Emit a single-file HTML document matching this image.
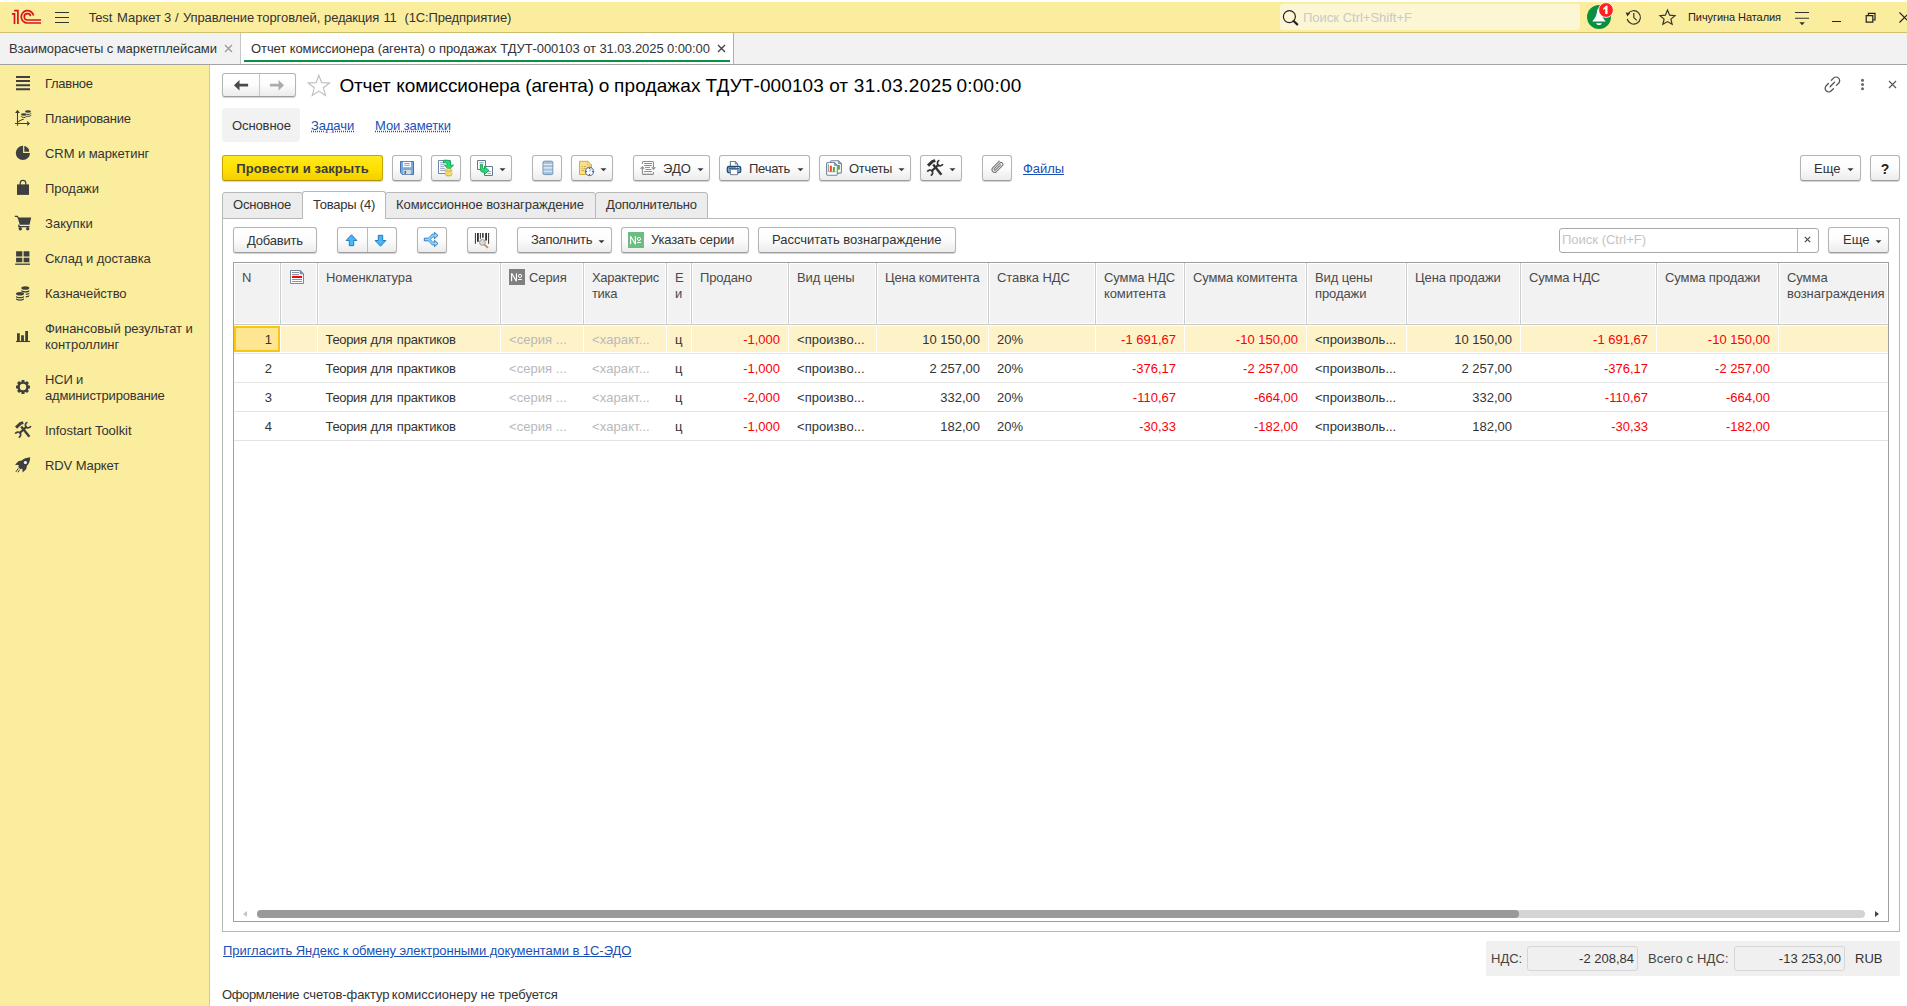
<!DOCTYPE html>
<html lang="ru">
<head>
<meta charset="utf-8">
<title>1C</title>
<style>
*{box-sizing:border-box;margin:0;padding:0}
html,body{width:1907px;height:1006px;overflow:hidden;background:#fff}
body{font-family:"Liberation Sans",sans-serif;font-size:13px;color:#333;position:relative;line-height:16px}
.abs{position:absolute}
.t{position:absolute;white-space:pre;line-height:16px}
/* top bar */
#topstrip{left:0;top:0;width:1907px;height:2px;background:#fff}
#topbar{left:0;top:2px;width:1907px;height:31px;background:#fbed9e;border-bottom:1px solid #cdbf6e}
#tabbar{left:0;top:33px;width:1907px;height:32px;background:#f2f2f2;border-bottom:1px solid #a3a3a3}
#side{left:0;top:65px;width:210px;height:941px;background:#fbed9e;border-right:1px solid #d6ca85}
.sb{position:absolute;left:45px;font-size:13px;line-height:16px;color:#333;white-space:pre}
.si{position:absolute;left:14px;width:18px;height:18px}
/* buttons */
.btn{position:absolute;height:26px;border:1px solid #b4b4b4;border-bottom-color:#9c9c9c;border-radius:3px;background:linear-gradient(#ffffff 0%,#fdfdfd 45%,#ececec 100%);box-shadow:0 1px 1px rgba(0,0,0,.18);font-size:13px;line-height:24px;padding-top:1px;color:#333;white-space:pre;text-align:center}
.btn.y{background:linear-gradient(#ffe920 0%,#ffe100 50%,#f2cf00 100%);border-color:#c8a600;border-bottom-color:#b39400;font-weight:bold;color:#3b3b3b}
.dd{display:inline-block;width:0;height:0;border-left:3.5px solid transparent;border-right:3.5px solid transparent;border-top:4px solid #333;vertical-align:middle;margin-left:6px;position:relative;top:0px}
a.lk{position:absolute;color:#1a50b5;text-decoration:underline;white-space:pre;line-height:16px}
a.dl{position:absolute;color:#1a50b5;text-decoration:underline dotted;white-space:pre;line-height:16px}
/* table */
.th{position:absolute;top:263px;height:60px;background:#f2f2f2;border-left:1px solid #fff;box-shadow:inset -1px 0 0 #d0d0d0;padding:7px 0 0 8px;color:#444;line-height:16px;white-space:pre}
.row{position:absolute;left:235px;width:1653px;height:29px;border-bottom:1px solid #e6e6e6}
.c{position:absolute;top:6px;line-height:16px;white-space:pre}
.r{text-align:right}
.neg{color:#fb0007}
.ph{color:#b9b9b9}
.tab{position:absolute;top:192px;height:27px;background:#ececec;border:1px solid #b8b8b8;border-radius:3px 3px 0 0;line-height:16px;padding:4px 0 0 10px;white-space:pre;color:#333}
.tab.on{top:191px;height:28px;background:#fff;border-bottom:none;padding-top:5px;z-index:2}
</style>
</head>
<body>
<div class="abs" id="topstrip"></div>
<div class="abs" id="topbar"></div>
<div class="abs" id="tabbar"></div>
<div class="abs" id="side"></div>
<!--TOPBAR-->
<svg class="abs" style="left:11px;top:9px" width="32" height="16" viewBox="0 0 32 16">
 <g fill="none" stroke="#d8141c" stroke-width="1.650">
  <path d="M.900 4.900H3.500V15" stroke-width="1.700"/>
  <path d="M3.100 1.700H6.900V15" stroke-width="1.700"/>
  <path d="M30 14H16.5A6.2 6.2 0 1 1 22.5 6.5"/>
  <path d="M30 11H16.5A3.2 3.2 0 1 1 19.6 7.2"/>
 </g>
</svg>
<svg class="abs" style="left:54px;top:11px" width="16" height="13" viewBox="0 0 16 13"><path d="M1 1.5h14M1 6.5h14M1 11.5h14" stroke="#333" stroke-width="1.1" fill="none"/></svg>
<div class="t" style="left:88.7px;top:10px;letter-spacing:-0.05px">Test</div>
<div class="t" style="left:117.1px;top:10px;letter-spacing:-0.05px">Маркет</div>
<div class="t" style="left:164px;top:10px;letter-spacing:0px">3</div>
<div class="t" style="left:175.1px;top:10px;letter-spacing:0px">/</div>
<div class="t" style="left:183px;top:10px;letter-spacing:-0.12px">Управление</div>
<div class="t" style="left:256.5px;top:10px;letter-spacing:-0.05px">торговлей,</div>
<div class="t" style="left:324.1px;top:10px;letter-spacing:-0.19px">редакция</div>
<div class="t" style="left:383.4px;top:10px;letter-spacing:-0.05px">11</div>
<div class="t" style="left:404.6px;top:10px;letter-spacing:-0.15px">(1С:Предприятие)</div>
<div class="abs" style="left:1280px;top:4px;width:300px;height:26px;background:#fdf6d4;border-radius:3px"></div>
<svg class="abs" style="left:1281px;top:8px" width="20" height="20" viewBox="0 0 20 20"><circle cx="8.4" cy="8.6" r="6" fill="none" stroke="#222" stroke-width="1.2"/><path d="M12.6 13l3.6 3.4" stroke="#222" stroke-width="2.2" stroke-linecap="round"/></svg>
<div class="t" style="left:1303px;top:10px;color:#c9c9c9">Поиск Ctrl+Shift+F</div>
<svg class="abs" style="left:1585px;top:2px" width="32" height="30" viewBox="0 0 32 30">
 <circle cx="14" cy="15" r="12" fill="#0a9040"/>
 <path d="M14 6.5c-1 0-1.6.7-1.7 1.6-.8 6-2.4 8.600-5 11.3h13.400c-2.600-2.700-4.200-5.300-5-11.300-.1-.9-.700-1.600-1.700-1.600z" fill="#fff"/>
 <path d="M11 21.200h6l-1.600 1.700h-2.800z" fill="#fff"/>
 <circle cx="21" cy="8" r="7.400" fill="#ff2020" stroke="#fff" stroke-width=".9"/>
 <path d="M18.300 6.200l2.700-2.400h1.500v8.300h-2.300v-5.300l-1.900 1.300z" fill="#fff"/>
</svg>
<svg class="abs" style="left:1623px;top:7px" width="22" height="22" viewBox="0 0 22 22">
 <path d="M5 6.900A6.700 6.700 0 1 1 4.200 12" fill="none" stroke="#333" stroke-width="1.200"/>
 <path d="M2.600 5.400l4.600.600-2.800 3.400z" fill="#333"/>
 <path d="M10.800 6v4.600l3 2.800" fill="none" stroke="#333" stroke-width="1.200"/>
</svg>
<svg class="abs" style="left:1658px;top:8px" width="19" height="19" viewBox="0 0 20 20"><path d="M10 2.200l2.250 5.300 5.650.5-4.300 3.700 1.300 5.500L10 14.300 5.100 17.200l1.300-5.500L2.100 8l5.650-.5z" fill="none" stroke="#333" stroke-width="1.250" stroke-linejoin="miter"/></svg>
<div class="t" style="left:1688px;top:9px;font-size:11px;color:#222;letter-spacing:-0.07px">Пичугина Наталия</div>
<svg class="abs" style="left:1794px;top:9px" width="18" height="18" viewBox="0 0 18 18"><path d="M1 3.500h14M1 9.200h14" stroke="#333" stroke-width="1.100" fill="none"/><path d="M5.400 13.200h5.400l-2.700 3z" fill="#333"/></svg>
<div class="abs" style="left:1832px;top:21px;width:9px;height:1.300px;background:#222"></div>
<svg class="abs" style="left:1864px;top:11px" width="14" height="14" viewBox="0 0 14 14"><path d="M2.200 4.600h6.600v6.600H2.200zM4.400 4.600V2.400h6.600v6.600H8.800" fill="none" stroke="#222" stroke-width="1.200"/></svg>
<svg class="abs" style="left:1897px;top:10px" width="14" height="14" viewBox="0 0 14 14"><path d="M2.500 2.500l10 10M12.500 2.500l-10 10" stroke="#222" stroke-width="1.200" fill="none"/></svg>
<!--TABS-->
<div class="t" style="left:9px;top:41px;color:#333;letter-spacing:-0.06px">Взаиморасчеты с маркетплейсами</div>
<svg class="abs" style="left:224px;top:44px" width="9" height="9" viewBox="0 0 9 9"><path d="M1 1l7 7M8 1l-7 7" stroke="#999" stroke-width="1.300" fill="none"/></svg>
<div class="abs" style="left:240px;top:33px;width:1px;height:31px;background:#c6c6c6"></div>
<div class="abs" style="left:241px;top:33px;width:492px;height:31px;background:#fff"></div>
<div class="abs" style="left:733px;top:33px;width:1px;height:31px;background:#b0b0b0"></div>
<div class="abs" style="left:244px;top:60px;width:486px;height:2px;background:#0a9040"></div>
<div class="t" style="left:251px;top:41px;color:#333;letter-spacing:-0.09px">Отчет комиссионера (агента) о продажах ТДУТ-000103 от 31.03.2025 0:00:00</div>
<svg class="abs" style="left:717px;top:44px" width="9" height="9" viewBox="0 0 9 9"><path d="M1 1l7 7M8 1l-7 7" stroke="#444" stroke-width="1.400" fill="none"/></svg>
<!--SIDEBAR-->
<svg class="abs" style="left:15px;top:75px" width="17" height="16" viewBox="0 0 17 16"><path d="M1 2h14M1 6.100h14M1 10.200h14M1 14.300h14" stroke="#3f3f3f" stroke-width="2" fill="none"/></svg>
<div class="sb" style="top:76px;letter-spacing:-0.28px">Главное</div>
<svg class="abs" style="left:14px;top:109px" width="18" height="18" viewBox="0 0 18 18">
 <path d="M3.500 2.500V16.700M1 14.500H14" stroke="#3f3f3f" stroke-width="1.100" fill="none"/>
 <path d="M3.500 .800l2.500 3.100H1zM16 14.500l-2.800 2.500v-5z" fill="#3f3f3f"/>
 <path d="M3.800 12.600H5.300L5.700 11.400H7.400L7.700 10.500H9.700" stroke="#3f3f3f" stroke-width="1" fill="none"/>
 <ellipse cx="14" cy="2.500" rx="3" ry="1.300" fill="#3f3f3f"/>
 <path d="M12.600 5.300c1.600.400 4.400.100 4.400-1M12.600 7.200c1.600.400 4.400.100 4.400-1" stroke="#3f3f3f" stroke-width="1" fill="none"/>
 <ellipse cx="9.800" cy="5.500" rx="2.900" ry="1.300" fill="#3f3f3f"/>
 <path d="M7 7.300c0 1.600 5.600 1.600 5.600 0" stroke="#3f3f3f" stroke-width="1" fill="none"/>
</svg>
<div class="sb" style="top:111px;letter-spacing:-0.25px">Планирование</div>
<svg class="abs" style="left:14px;top:144px" width="18" height="18" viewBox="0 0 18 18">
 <circle cx="8.900" cy="8.900" r="7.100" fill="#3f3f3f"/>
 <path d="M9.700 1v7.300h7.500" stroke="#fbed9e" stroke-width="1.200" fill="none"/>
 <path d="M14.300 2.600A7.100 7.100 0 0 1 16 8" stroke="#fbed9e" stroke-width="1.300" fill="none"/>
</svg>
<div class="sb" style="top:146px;letter-spacing:-0.07px">CRM и маркетинг</div>
<svg class="abs" style="left:14px;top:179px" width="18" height="18" viewBox="0 0 18 18">
 <path d="M3 5.400h12v10.500H3z" fill="#3f3f3f"/>
 <path d="M6.200 7.400V4.200a2.800 2.800 0 0 1 5.600 0v3.200" stroke="#3f3f3f" stroke-width="1.200" fill="none"/>
</svg>
<div class="sb" style="top:181px;letter-spacing:-0.05px">Продажи</div>
<svg class="abs" style="left:14px;top:215px" width="19" height="17" viewBox="0 0 19 17">
 <path d="M.800 1.300h2.600l1 2" stroke="#3f3f3f" stroke-width="1.200" fill="none"/>
 <path d="M3.600 2.600h13.600l-1.700 7.200H5.800z" fill="#3f3f3f"/>
 <path d="M5.200 9.500l-.500 2.200h10.800" stroke="#3f3f3f" stroke-width="1.200" fill="none"/>
 <circle cx="6.300" cy="13.800" r="1.700" fill="#3f3f3f"/><circle cx="13.700" cy="13.800" r="1.700" fill="#3f3f3f"/>
</svg>
<div class="sb" style="top:216px;letter-spacing:0.05px">Закупки</div>
<svg class="abs" style="left:14px;top:250px" width="18" height="16" viewBox="0 0 18 16">
 <path d="M2.100 1.300h6.200v5.100H2.100zM9.600 1.300h5.800v5.100H9.600zM2.100 7.700h6.200v4.600H2.100zM9.600 7.700h5.800v4.600H9.600z" fill="#3f3f3f"/>
 <path d="M1.200 14.200H16" stroke="#3f3f3f" stroke-width="1.300"/>
</svg>
<div class="sb" style="top:251px;letter-spacing:-0.05px">Склад и доставка</div>
<svg class="abs" style="left:14px;top:285px" width="18" height="17" viewBox="0 0 18 17">
 <g fill="#3f3f3f">
 <ellipse cx="11.300" cy="3" rx="4" ry="1.800"/>
 <path d="M7.300 4.600c0 2.200 8 2.200 8 0v1.300c0 2.200-8 2.200-8 0z"/>
 <path d="M11.800 8.700c1.900-.100 3.500-.700 3.500-1.700v1.300c0 1-1.600 1.600-3.500 1.700z"/>
 <path d="M11.800 11.100c1.900-.100 3.500-.700 3.500-1.700v1.300c0 1-1.600 1.600-3.500 1.700z"/>
 <ellipse cx="6" cy="8.800" rx="4" ry="1.800"/>
 <path d="M2 10.400c0 2.200 8 2.200 8 0v1.300c0 2.200-8 2.200-8 0z"/>
 <path d="M2 12.800c0 2.200 8 2.200 8 0v1.300c0 2.200-8 2.200-8 0z"/>
 </g>
</svg>
<div class="sb" style="top:286px;letter-spacing:-0.08px">Казначейство</div>
<svg class="abs" style="left:14px;top:328px" width="18" height="16" viewBox="0 0 18 16">
 <path d="M3 5.200h2.800v8H3zM7.100 7.300h2.800v5.900H7.100zM11.200 3.100H14v10.100h-2.800z" fill="#3f3f3f"/>
 <path d="M2 13.500h14" stroke="#3f3f3f" stroke-width="1.100"/>
</svg>
<div class="sb" style="top:321px;letter-spacing:-0.05px">Финансовый результат и
контроллинг</div>
<svg class="abs" style="left:14px;top:378px" width="18" height="18" viewBox="0 0 18 18">
 <g transform="translate(9 9)">
  <g fill="#3f3f3f">
   <rect x="-1.500" y="-7" width="3" height="14" rx=".5"/>
   <rect x="-1.500" y="-7" width="3" height="14" rx=".5" transform="rotate(45)"/>
   <rect x="-1.500" y="-7" width="3" height="14" rx=".5" transform="rotate(90)"/>
   <rect x="-1.500" y="-7" width="3" height="14" rx=".5" transform="rotate(135)"/>
   <circle r="5.600"/>
  </g>
  <circle r="3.200" fill="#fbed9e"/>
 </g>
</svg>
<div class="sb" style="top:372px;letter-spacing:-0.17px">НСИ и
администрирование</div>
<svg class="abs" style="left:14px;top:421px" width="18" height="18" viewBox="0 0 18 18">
 <g stroke="#3f3f3f" fill="none">
  <path d="M7.200 5.600L15.400 15.800" stroke-width="2.400"/>
  <path d="M2 6.700L6.600 2.400L9.300 1.600" stroke-width="3" stroke-linejoin="round"/>
  <path d="M5.400 12.300L12.600 5.600" stroke-width="2.200"/>
  <path d="M13.400 1.300A2.800 2.800 0 1 0 16.800 5" stroke-width="1.700"/>
  <path d="M4.700 16.500A2.800 2.800 0 1 0 1.300 12.800" stroke-width="1.700"/>
 </g>
</svg>
<div class="sb" style="top:423px;letter-spacing:-0.04px">Infostart Toolkit</div>
<svg class="abs" style="left:14px;top:456px" width="18" height="18" viewBox="0 0 18 18">
 <path d="M16.200 1.200C12.400 1.500 9.700 2.600 7.700 4.600L4.400 5.200L1 8.800L5 9.300L4.200 11.100L6.400 13.300L8.200 12.500L8.700 16.500L12.300 13.100L12.900 9.800C15 7.700 16.100 5 16.200 1.200Z" fill="#3f3f3f"/>
 <circle cx="11.400" cy="6.500" r="1.600" fill="#fff"/>
 <path d="M4.300 12.400L1.800 16M5.600 13.600L4 16.300" stroke="#3f3f3f" stroke-width="1"/>
</svg>
<div class="sb" style="top:458px;letter-spacing:-0.1px">RDV Маркет</div>
<!--HEADER-->
<div class="btn" style="left:222px;top:73px;width:74px;height:24px;border-radius:3px"></div>
<div class="abs" style="left:259px;top:74px;width:1px;height:22px;background:#c8c8c8"></div>
<svg class="abs" style="left:233px;top:78px" width="16" height="14" viewBox="0 0 16 14"><path d="M.900 7.200L6.500 1.900V5.800H15.100V8.600H6.500V12.500Z" fill="#4a4a4a"/></svg>
<svg class="abs" style="left:269px;top:78px" width="16" height="14" viewBox="0 0 16 14"><path d="M15.100 7.200L9.500 1.900V5.800H.900V8.600H9.500V12.500Z" fill="#ababab"/></svg>
<svg class="abs" style="left:306px;top:73px" width="26" height="25" viewBox="0 0 26 25"><path d="M12.800 2.200l2.900 7.400 7.800.3-6.100 4.900 2.100 7.600-6.700-4.300-6.600 4.300 2.100-7.600-6.100-4.900 7.800-.3z" fill="#fff" stroke="#b9bcc0" stroke-width="1.100" stroke-linejoin="miter"/></svg>
<div class="t" style="left:339.5px;top:74px;font-size:19px;line-height:24px;color:#000;letter-spacing:-0.2px">Отчет</div>
<div class="t" style="left:396.3px;top:74px;font-size:19px;line-height:24px;color:#000;letter-spacing:-0.12px">комиссионера</div>
<div class="t" style="left:525.3px;top:74px;font-size:19px;line-height:24px;color:#000;letter-spacing:-0.16px">(агента)</div>
<div class="t" style="left:598.8px;top:74px;font-size:19px;line-height:24px;color:#000;letter-spacing:0px">о</div>
<div class="t" style="left:614px;top:74px;font-size:19px;line-height:24px;color:#000;letter-spacing:0.14px">продажах</div>
<div class="t" style="left:705.5px;top:74px;font-size:19px;line-height:24px;color:#000;letter-spacing:0.08px">ТДУТ-000103</div>
<div class="t" style="left:829.3px;top:74px;font-size:19px;line-height:24px;color:#000;letter-spacing:-0.2px">от</div>
<div class="t" style="left:853.8px;top:74px;font-size:19px;line-height:24px;color:#000;letter-spacing:0.36px">31.03.2025</div>
<div class="t" style="left:956.5px;top:74px;font-size:19px;line-height:24px;color:#000;letter-spacing:0.23px">0:00:00</div>
<svg class="abs" style="left:1823px;top:75px" width="19" height="19" viewBox="0 0 19 19"><g fill="none" stroke="#555" stroke-width="1.300" stroke-linecap="round"><path d="M8.400 5.200l2.100-2.100a3.600 3.600 0 0 1 5.100 5.100l-2.200 2.200"/><path d="M10.400 13.700l-2.100 2.100a3.600 3.600 0 0 1-5.100-5.100l2.200-2.200"/><path d="M7.100 11.700l4.400-4.400"/></g></svg>
<svg class="abs" style="left:1860px;top:78px" width="5" height="13" viewBox="0 0 5 13"><circle cx="2.500" cy="2.300" r="1.500" fill="#666"/><circle cx="2.500" cy="6.500" r="1.500" fill="#666"/><circle cx="2.500" cy="10.700" r="1.500" fill="#666"/></svg>
<svg class="abs" style="left:1888px;top:80px" width="9" height="9" viewBox="0 0 9 9"><path d="M1 1l7 7M8 1l-7 7" stroke="#555" stroke-width="1.100" fill="none"/></svg>
<div class="abs" style="left:222px;top:108px;width:78px;height:34px;background:#f2f2f2;border-radius:4px"></div>
<div class="t" style="left:232px;top:118px;color:#333;letter-spacing:-0.1px">Основное</div>
<a class="dl" style="left:311px;top:118px;letter-spacing:-0.1px">Задачи</a>
<a class="dl" style="left:375px;top:118px;letter-spacing:-0.1px">Мои заметки</a>
<!--CMDBAR-->
<div class="btn y" style="left:222px;top:155px;width:161px;letter-spacing:0.12px">Провести и закрыть</div>
<div class="btn" style="left:392px;top:155px;width:30px"></div>
<svg class="abs" style="left:399px;top:160px" width="16" height="16" viewBox="0 0 16 16">
 <path d="M1.500 1.500h13v13H3.300L1.500 12.700z" fill="#7ba7dc" stroke="#4572ad" stroke-width="1"/>
 <path d="M4 1.800h8v5.400H4z" fill="#fff"/><path d="M5.200 3.500h5.600M5.200 5.300h5.600" stroke="#7ba7dc" stroke-width="1"/>
 <path d="M4.300 10h7.600v4.300H4.300z" fill="#d8dcdf"/><path d="M5.500 10.800h1.600v3.200H5.500z" fill="#3f6fae"/>
</svg>
<div class="btn" style="left:431px;top:155px;width:30px"></div>
<svg class="abs" style="left:437px;top:159px" width="18" height="18" viewBox="0 0 18 18">
 <path d="M1.500 1.500h12v13h-12z" fill="#fff" stroke="#6d87a8" stroke-width="1"/>
 <path d="M3.200 3.700h4M3.200 5.700h4M3.200 7.700h4M3.200 9.700h5M3.200 11.700h5" stroke="#8ea3c0" stroke-width="1"/>
 <path d="M6.400 1.200H10.500C12.600 1.200 13.700 2.400 13.700 4.400V6.200H16.600L11.900 10.600L7.300 6.200H10.100V4.900C10.100 4.200 9.800 3.900 9.100 3.900H6.400Z" fill="#1fdc78" stroke="#0c9a48" stroke-width=".8" stroke-linejoin="round"/>
 <path d="M8.400 10.900v4.900c0 1.700 6.400 1.700 6.400 0v-4.900z" fill="#f0c832" stroke="#cda21a" stroke-width=".6"/>
 <ellipse cx="11.600" cy="10.900" rx="3.200" ry="1.200" fill="#f9e88a" stroke="#cda21a" stroke-width=".6"/>
 <path d="M8.400 12.500c0 1.700 6.400 1.700 6.400 0M8.400 14.100c0 1.700 6.400 1.700 6.400 0" fill="none" stroke="#fdf2b4" stroke-width=".8"/>
</svg>
<div class="btn" style="left:470px;top:155px;width:42px"></div>
<svg class="abs" style="left:476px;top:159px" width="18" height="18" viewBox="0 0 18 18">
 <path d="M1.500 1.500h8v9h-8z" fill="#fff" stroke="#5e7896" stroke-width="1"/>
 <path d="M3.200 3.700h4.600" stroke="#8ea3c0" stroke-width="1"/>
 <path d="M8.500 7.500h8v9h-8z" fill="#fff" stroke="#5e7896" stroke-width="1"/>
 <path d="M11.500 12.600h3.600M11.500 14.600h3.600" stroke="#8ea3c0" stroke-width="1"/>
 <path d="M4.300 5.400h2.200v3c0 .9.400 1.300 1.300 1.300h.6V7.400l4.600 4-4.600 4v-2.200H7.200c-2 0-2.900-1-2.900-2.900z" fill="#1fdc78" stroke="#0c9a48" stroke-width=".8"/>
</svg>
<svg class="abs" style="left:499px;top:168px" width="7" height="4" viewBox="0 0 7 4"><path d="M.500 .200h6L3.500 3.300z" fill="#3a3a3a"/></svg>
<div class="btn" style="left:532px;top:155px;width:30px"></div>
<svg class="abs" style="left:541.500px;top:160px" width="12" height="16" viewBox="0 0 12 16">
 <rect x="1" y="1.200" width="9.800" height="13.400" rx="1.300" fill="#a5c2dc" stroke="#6f93b6" stroke-width="1"/>
 <path d="M1.500 4.500h8.800M1.500 7.900h8.800M1.500 11.300h8.800" stroke="#e6eff7" stroke-width="1.100"/>
</svg>
<div class="btn" style="left:571px;top:155px;width:42px"></div>
<svg class="abs" style="left:578px;top:160px" width="18" height="18" viewBox="0 0 18 18">
 <path d="M1.500 1.300H9.800L13.500 5V14.500H1.500Z" fill="#f6df8e" stroke="#d6ad3c" stroke-width="1"/>
 <path d="M9.800 1.300V5H13.500Z" fill="#fcf1c4" stroke="#d6ad3c" stroke-width=".8"/>
 <path d="M3.500 6.500h1.500M6 6.500h2M3.500 8.600h1M5.500 8.600h2M3.500 10.500h2.500" stroke="#d6ad3c" stroke-width="1"/>
 <circle cx="11.500" cy="11.500" r="4.100" fill="#fff" stroke="#4a86c2" stroke-width="1.200"/>
 <path d="M11.500 11.500L13 9.300" stroke="#8fb4e0" stroke-width="1.100"/>
 <g fill="#f01818"><circle cx="11.500" cy="8.500" r=".650"/><circle cx="11.500" cy="14.500" r=".650"/><circle cx="8.500" cy="11.500" r=".650"/><circle cx="14.500" cy="11.500" r=".650"/></g>
</svg>
<svg class="abs" style="left:600px;top:168px" width="7" height="4" viewBox="0 0 7 4"><path d="M.500 .200h6L3.500 3.300z" fill="#3a3a3a"/></svg>
<div class="btn" style="left:633px;top:155px;width:77px"></div>
<svg class="abs" style="left:639px;top:160px" width="18" height="16" viewBox="0 0 18 16">
 <path d="M3.400 8.600V13.200a1.200 1.200 0 0 0 1.200 1.200H13.300a1.200 1.200 0 0 0 1.200-1.200V12.200M3.400 3.900V2.700a1.200 1.200 0 0 1 1.200-1.200H13.300a1.200 1.200 0 0 1 1.200 1.200V7.200" fill="none" stroke="#8c8c8c" stroke-width="1.100"/>
 <path d="M5.100 3.500h7.900M5.100 5.500h7.900M6 7.400h5M6.500 9.500h5.800M5.100 11.500h7.900" stroke="#8f8f8f" stroke-width="1"/>
 <path d="M.900 8.800L3.400 6L5.900 8.800Z" fill="#8c8c8c"/>
 <path d="M12 7.200H17L14.500 10Z" fill="#8c8c8c"/>
</svg>
<div class="t" style="left:663px;top:161px">ЭДО</div>
<svg class="abs" style="left:697px;top:168px" width="7" height="4" viewBox="0 0 7 4"><path d="M.500 .200h6L3.500 3.300z" fill="#3a3a3a"/></svg>
<div class="btn" style="left:719px;top:155px;width:91px"></div>
<svg class="abs" style="left:726px;top:160px" width="16" height="16" viewBox="0 0 16 16">
 <path d="M4.400 6.600V1.500H9.300L11.600 4.100V6.600" fill="#fff" stroke="#6e8098" stroke-width="1.100"/>
 <path d="M9.200 1.500V4.100H11.600Z" fill="#7e90a6" stroke="#6e8098" stroke-width=".6"/>
 <rect x="1.300" y="6.500" width="13.400" height="6.200" rx="1.600" fill="#7fa6cf" stroke="#1f4e7c" stroke-width="1.300"/>
 <path d="M3 8.500h10" stroke="#3c5d80" stroke-width="1"/>
 <circle cx="10.300" cy="7.500" r=".550" fill="#fff"/><circle cx="12.400" cy="7.500" r=".550" fill="#fff"/>
 <path d="M4.400 9.300h7.200v5.400H4.400z" fill="#fff" stroke="#6e8098" stroke-width="1"/>
</svg>
<div class="t" style="left:749px;top:161px;letter-spacing:-0.25px">Печать</div>
<svg class="abs" style="left:797px;top:168px" width="7" height="4" viewBox="0 0 7 4"><path d="M.500 .200h6L3.500 3.300z" fill="#3a3a3a"/></svg>
<div class="btn" style="left:819px;top:155px;width:92px"></div>
<svg class="abs" style="left:825px;top:159px" width="18" height="18" viewBox="0 0 18 18">
 <path d="M5.500 12.900V2.900a1.200 1.200 0 0 1 1.200-1.200H13.300L16.400 4.800V12.900a1.200 1.200 0 0 1-1.200 1.200H6.700a1.200 1.200 0 0 1-1.200-1.200Z" fill="#fff" stroke="#70859a" stroke-width="1.100"/>
 <path d="M13.300 1.700V4.800H16.400Z" fill="#8a9cae" stroke="#70859a" stroke-width=".6"/>
 <path d="M13 5.900h1.900v4.100H13z" fill="#4fae3c"/><path d="M12.800 10.500h2" stroke="#999" stroke-width=".8"/>
 <path d="M1.600 15.100V4.700a1.200 1.200 0 0 1 1.200-1.200H9.300L12.300 6.500V15.100a1.200 1.200 0 0 1-1.200 1.200H2.800a1.200 1.200 0 0 1-1.200-1.200Z" fill="#fff" stroke="#70859a" stroke-width="1.100"/>
 <path d="M9.300 3.500V6.500H12.300Z" fill="#8a9cae" stroke="#70859a" stroke-width=".6"/>
 <path d="M3.400 5.200V12.700H10.700" fill="none" stroke="#8a8a8a" stroke-width=".9"/>
 <path d="M4.900 6.800h1.900v5.500H4.900z" fill="#f03c1c"/><path d="M7.900 8h2v4.300h-2z" fill="#3fb02a"/>
</svg>
<div class="t" style="left:849px;top:161px;letter-spacing:-0.3px">Отчеты</div>
<svg class="abs" style="left:898px;top:168px" width="7" height="4" viewBox="0 0 7 4"><path d="M.500 .200h6L3.500 3.300z" fill="#3a3a3a"/></svg>
<div class="btn" style="left:920px;top:155px;width:42px"></div>
<svg class="abs" style="left:926px;top:159px" width="18" height="18" viewBox="0 0 18 18">
 <g stroke="#333" fill="none">
  <path d="M7.200 5.600L15.400 15.800" stroke-width="2.400"/>
  <path d="M2 6.700L6.600 2.400L9.300 1.600" stroke-width="3" stroke-linejoin="round"/>
  <path d="M5.400 12.300L12.600 5.600" stroke-width="2.200"/>
  <path d="M13.400 1.300A2.800 2.800 0 1 0 16.800 5" stroke-width="1.700"/>
  <path d="M4.700 16.500A2.800 2.800 0 1 0 1.300 12.800" stroke-width="1.700"/>
 </g>
</svg>
<svg class="abs" style="left:949px;top:168px" width="7" height="4" viewBox="0 0 7 4"><path d="M.500 .200h6L3.500 3.300z" fill="#3a3a3a"/></svg>
<div class="btn" style="left:982px;top:155px;width:30px"></div>
<svg class="abs" style="left:989px;top:159px" width="16" height="17" viewBox="0 0 16 17">
 <path d="M10.300 2.200L3.600 8.900a2.700 2.700 0 0 0 3.800 3.800l6-6a1.800 1.800 0 0 0-2.600-2.600L5.300 9.600a.9.900 0 0 0 1.300 1.300l5-5" fill="none" stroke="#777" stroke-width="1.100" stroke-linecap="round"/>
</svg>
<a class="lk" style="left:1023px;top:161px;letter-spacing:-0.05px">Файлы</a>
<div class="btn" style="left:1800px;top:155px;width:61px"></div>
<div class="t" style="left:1814px;top:161px">Еще</div>
<svg class="abs" style="left:1847px;top:168px" width="7" height="4" viewBox="0 0 7 4"><path d="M.500 .200h6L3.500 3.300z" fill="#3a3a3a"/></svg>
<div class="btn" style="left:1870px;top:155px;width:30px;font-weight:bold;color:#222;font-size:14px">?</div>
<!--PANEL-->
<div class="abs" style="left:222px;top:218px;width:1678px;height:714px;border:1px solid #b8b8b8;background:#fff"></div>
<div class="tab" style="left:222px;width:81px;letter-spacing:-0.2px">Основное</div>
<div class="tab on" style="left:302px;width:84px;letter-spacing:-0.22px">Товары (4)</div>
<div class="tab" style="left:385px;width:211px;letter-spacing:-0.06px">Комиссионное вознаграждение</div>
<div class="tab" style="left:595px;width:113px;letter-spacing:-0.22px">Дополнительно</div>
<div class="btn" style="left:233px;top:227px;width:84px;letter-spacing:-0.2px">Добавить</div>
<div class="btn" style="left:337px;top:227px;width:60px"></div>
<div class="abs" style="left:367px;top:228px;width:1px;height:24px;background:#bcbcbc"></div>
<svg class="abs" style="left:345px;top:234px" width="13" height="13" viewBox="0 0 13 13"><path d="M6.500 .800l5.400 5.700H8.700v5.200H4.300V6.500H1.100z" fill="#4bb5f5" stroke="#1f7fbf" stroke-width="1" stroke-linejoin="round"/></svg>
<svg class="abs" style="left:374px;top:234px" width="13" height="13" viewBox="0 0 13 13"><path d="M6.500 12.200L1.100 6.500h3.200V1.300h4.400v5.200h3.200z" fill="#4bb5f5" stroke="#1f7fbf" stroke-width="1" stroke-linejoin="round"/></svg>
<div class="btn" style="left:417px;top:227px;width:30px"></div>
<svg class="abs" style="left:423px;top:231px" width="17" height="17" viewBox="0 0 17 17">
 <path d="M1.300 7.200H4.600C6 7.200 6.800 6 7.600 4.900C8.300 3.900 9 3.200 10 3.200H11.500V1.300L15 4.500L11.500 7.700V5.800H10.200C9.600 5.800 9.200 6.200 8.700 6.800L7.300 8.500L8.700 10.200C9.200 10.800 9.600 11.200 10.200 11.200H11.500V9.300L15 12.500L11.500 15.700V13.800H10C9 13.800 8.300 13.100 7.600 12.100C6.800 11 6 9.800 4.600 9.800H1.300Z" fill="#93d6f9" stroke="#2b80c2" stroke-width="1" stroke-linejoin="round"/>
</svg>
<div class="btn" style="left:467px;top:227px;width:30px"></div>
<svg class="abs" style="left:474px;top:232px" width="17" height="17" viewBox="0 0 17 17">
 <path d="M1.400 1v10.800" stroke="#2e2e2e" stroke-width="1"/><path d="M3.900 1v8.800" stroke="#2e2e2e" stroke-width="1.800"/><path d="M6.400 1v5.800" stroke="#2e2e2e" stroke-width="1"/><path d="M8.900 1v4.700" stroke="#2e2e2e" stroke-width="1.500"/><path d="M12.100 1v7.400" stroke="#2e2e2e" stroke-width="1.800"/><path d="M14.600 1v10.800" stroke="#2e2e2e" stroke-width="1"/>
 <circle cx="8.400" cy="10.400" r="2.900" fill="#c6dcf8" stroke="#c48d5c" stroke-width="1"/>
 <path d="M10.700 12.900l2.700 2.500" stroke="#c48d5c" stroke-width="1.800" stroke-linecap="round"/>
</svg>
<div class="btn" style="left:517px;top:227px;width:95px"></div>
<div class="t" style="left:531px;top:232px;letter-spacing:-0.3px">Заполнить</div>
<svg class="abs" style="left:598px;top:240px" width="7" height="4" viewBox="0 0 7 4"><path d="M.500 .200h6L3.500 3.300z" fill="#3a3a3a"/></svg>
<div class="btn" style="left:621px;top:227px;width:128px"></div>
<svg class="abs" style="left:628px;top:232px" width="16" height="16" viewBox="0 0 16 16"><rect width="16" height="16" fill="#6cbd82"/><path d="M2.600 12.200V4.200L7.400 12.200V4.200" fill="none" stroke="#fff" stroke-width="1.150" stroke-linejoin="bevel"/><circle cx="11" cy="6.900" r="1.600" fill="none" stroke="#fff" stroke-width="1"/><path d="M9.200 10.500h3.700" stroke="#fff" stroke-width="1"/></svg>
<div class="t" style="left:651px;top:232px;letter-spacing:-0.18px">Указать серии</div>
<div class="btn" style="left:758px;top:227px;width:198px"></div>
<div class="t" style="left:772px;top:232px;letter-spacing:-0.02px">Рассчитать вознаграждение</div>
<div class="abs" style="left:1559px;top:228px;width:260px;height:25px;border:1px solid #a9a9a9;border-radius:3px;background:#fff"></div>
<div class="abs" style="left:1797px;top:229px;width:1px;height:23px;background:#b5b5b5"></div>
<div class="t" style="left:1562px;top:232px;color:#c4c4c4">Поиск (Ctrl+F)</div>
<svg class="abs" style="left:1804px;top:236px" width="7" height="7" viewBox="0 0 7 7"><path d="M.800 .800l5.400 5.400M6.200 .800L.800 6.200" stroke="#444" stroke-width="1.100"/></svg>
<div class="btn" style="left:1828px;top:227px;width:61px"></div>
<div class="t" style="left:1843px;top:232px">Еще</div>
<svg class="abs" style="left:1875px;top:240px" width="7" height="4" viewBox="0 0 7 4"><path d="M.500 .200h6L3.500 3.300z" fill="#3a3a3a"/></svg>
<!--TABLE-->
<div class="abs" style="left:233px;top:262px;width:1656px;height:660px;border:1px solid #a0a0a0;background:#fff"></div>
<div class="abs" style="left:235px;top:264px;width:44px;height:59px;background:#f2f2f2"></div>
<div class="abs" style="left:280px;top:263px;width:1px;height:61px;background:#cdcdcd"></div>
<div class="t" style="left:242px;top:270px;color:#4a4a4a;letter-spacing:0px">N</div>
<div class="abs" style="left:282px;top:264px;width:34px;height:59px;background:#f2f2f2"></div>
<div class="abs" style="left:317px;top:263px;width:1px;height:61px;background:#cdcdcd"></div>
<div class="abs" style="left:319px;top:264px;width:180px;height:59px;background:#f2f2f2"></div>
<div class="abs" style="left:500px;top:263px;width:1px;height:61px;background:#cdcdcd"></div>
<div class="t" style="left:326px;top:270px;color:#4a4a4a;letter-spacing:-0.1px">Номенклатура</div>
<div class="abs" style="left:502px;top:264px;width:80px;height:59px;background:#f2f2f2"></div>
<div class="abs" style="left:583px;top:263px;width:1px;height:61px;background:#cdcdcd"></div>
<div class="abs" style="left:585px;top:264px;width:80px;height:59px;background:#f2f2f2"></div>
<div class="abs" style="left:666px;top:263px;width:1px;height:61px;background:#cdcdcd"></div>
<div class="t" style="left:592px;top:270px;color:#4a4a4a;letter-spacing:-0.33px">Характерис
тика</div>
<div class="abs" style="left:668px;top:264px;width:22px;height:59px;background:#f2f2f2"></div>
<div class="abs" style="left:691px;top:263px;width:1px;height:61px;background:#cdcdcd"></div>
<div class="t" style="left:675px;top:270px;color:#4a4a4a;letter-spacing:0px">Е
и</div>
<div class="abs" style="left:693px;top:264px;width:94px;height:59px;background:#f2f2f2"></div>
<div class="abs" style="left:788px;top:263px;width:1px;height:61px;background:#cdcdcd"></div>
<div class="t" style="left:700px;top:270px;color:#4a4a4a;letter-spacing:-0.1px">Продано</div>
<div class="abs" style="left:790px;top:264px;width:85px;height:59px;background:#f2f2f2"></div>
<div class="abs" style="left:876px;top:263px;width:1px;height:61px;background:#cdcdcd"></div>
<div class="t" style="left:797px;top:270px;color:#4a4a4a;letter-spacing:-0.1px">Вид цены</div>
<div class="abs" style="left:878px;top:264px;width:109px;height:59px;background:#f2f2f2"></div>
<div class="abs" style="left:988px;top:263px;width:1px;height:61px;background:#cdcdcd"></div>
<div class="t" style="left:885px;top:270px;color:#4a4a4a;letter-spacing:-0.21px">Цена комитента</div>
<div class="abs" style="left:990px;top:264px;width:104px;height:59px;background:#f2f2f2"></div>
<div class="abs" style="left:1095px;top:263px;width:1px;height:61px;background:#cdcdcd"></div>
<div class="t" style="left:997px;top:270px;color:#4a4a4a;letter-spacing:-0.1px">Ставка НДС</div>
<div class="abs" style="left:1097px;top:264px;width:86px;height:59px;background:#f2f2f2"></div>
<div class="abs" style="left:1184px;top:263px;width:1px;height:61px;background:#cdcdcd"></div>
<div class="t" style="left:1104px;top:270px;color:#4a4a4a;letter-spacing:-0.1px">Сумма НДС
комитента</div>
<div class="abs" style="left:1186px;top:264px;width:119px;height:59px;background:#f2f2f2"></div>
<div class="abs" style="left:1306px;top:263px;width:1px;height:61px;background:#cdcdcd"></div>
<div class="t" style="left:1193px;top:270px;color:#4a4a4a;letter-spacing:-0.17px">Сумма комитента</div>
<div class="abs" style="left:1308px;top:264px;width:97px;height:59px;background:#f2f2f2"></div>
<div class="abs" style="left:1406px;top:263px;width:1px;height:61px;background:#cdcdcd"></div>
<div class="t" style="left:1315px;top:270px;color:#4a4a4a;letter-spacing:-0.1px">Вид цены
продажи</div>
<div class="abs" style="left:1408px;top:264px;width:111px;height:59px;background:#f2f2f2"></div>
<div class="abs" style="left:1520px;top:263px;width:1px;height:61px;background:#cdcdcd"></div>
<div class="t" style="left:1415px;top:270px;color:#4a4a4a;letter-spacing:-0.1px">Цена продажи</div>
<div class="abs" style="left:1522px;top:264px;width:133px;height:59px;background:#f2f2f2"></div>
<div class="abs" style="left:1656px;top:263px;width:1px;height:61px;background:#cdcdcd"></div>
<div class="t" style="left:1529px;top:270px;color:#4a4a4a;letter-spacing:-0.1px">Сумма НДС</div>
<div class="abs" style="left:1658px;top:264px;width:119px;height:59px;background:#f2f2f2"></div>
<div class="abs" style="left:1778px;top:263px;width:1px;height:61px;background:#cdcdcd"></div>
<div class="t" style="left:1665px;top:270px;color:#4a4a4a;letter-spacing:-0.1px">Сумма продажи</div>
<div class="abs" style="left:1780px;top:264px;width:107px;height:59px;background:#f2f2f2"></div>
<div class="t" style="left:1787px;top:270px;color:#4a4a4a;letter-spacing:-0.06px">Сумма
вознаграждения</div>
<div class="abs" style="left:234px;top:324px;width:1654px;height:1px;background:#c9c9c9"></div>
<svg class="abs" style="left:289px;top:269px" width="16" height="16" viewBox="0 0 16 16">
 <path d="M1.500 1.500H11.500L14.500 4.800V14.500H1.500Z" fill="#fff" stroke="#7a8a9c" stroke-width="1"/>
 <path d="M11 1.500V5H14.500Z" fill="#7f8fa0" stroke="#7a8a9c" stroke-width=".6"/>
 <path d="M3 3.500h7M3 5.500h7M3 10.500h10M3 12.500h10" stroke="#8695a5" stroke-width="1"/>
 <path d="M3 6.900h10v2.100H3z" fill="#ff0000"/>
</svg>
<svg class="abs" style="left:509px;top:269px" width="16" height="16" viewBox="0 0 16 16"><rect width="16" height="16" fill="#808080"/><path d="M2.600 12.200V4.200L7.400 12.200V4.200" fill="none" stroke="#fff" stroke-width="1.150" stroke-linejoin="bevel"/><circle cx="11" cy="6.900" r="1.600" fill="none" stroke="#fff" stroke-width="1"/><path d="M9.200 10.500h3.700" stroke="#fff" stroke-width="1"/></svg>
<div class="t" style="left:529px;top:270px;color:#4a4a4a;letter-spacing:-0.1px">Серия</div>
<div class="abs" style="left:234px;top:326px;width:46px;height:26px;background:#fee591;border:2px solid #f9c710"></div>
<div class="abs" style="left:281px;top:326px;width:36px;height:26px;background:#fef2c9"></div>
<div class="abs" style="left:318px;top:326px;width:182px;height:26px;background:#fef2c9"></div>
<div class="abs" style="left:501px;top:326px;width:82px;height:26px;background:#fef2c9"></div>
<div class="abs" style="left:584px;top:326px;width:82px;height:26px;background:#fef2c9"></div>
<div class="abs" style="left:667px;top:326px;width:24px;height:26px;background:#fef2c9"></div>
<div class="abs" style="left:692px;top:326px;width:96px;height:26px;background:#fef2c9"></div>
<div class="abs" style="left:789px;top:326px;width:87px;height:26px;background:#fef2c9"></div>
<div class="abs" style="left:877px;top:326px;width:111px;height:26px;background:#fef2c9"></div>
<div class="abs" style="left:989px;top:326px;width:106px;height:26px;background:#fef2c9"></div>
<div class="abs" style="left:1096px;top:326px;width:88px;height:26px;background:#fef2c9"></div>
<div class="abs" style="left:1185px;top:326px;width:121px;height:26px;background:#fef2c9"></div>
<div class="abs" style="left:1307px;top:326px;width:99px;height:26px;background:#fef2c9"></div>
<div class="abs" style="left:1407px;top:326px;width:113px;height:26px;background:#fef2c9"></div>
<div class="abs" style="left:1521px;top:326px;width:135px;height:26px;background:#fef2c9"></div>
<div class="abs" style="left:1657px;top:326px;width:121px;height:26px;background:#fef2c9"></div>
<div class="abs" style="left:1779px;top:326px;width:109px;height:26px;background:#fef2c9"></div>
<div class="abs" style="left:234px;top:353px;width:1654px;height:1px;background:#e3e3e3"></div>
<div class="t r " style="left:152px;width:120px;top:332px">1</div>
<div class="t" style="left:325.600px;top:332px;letter-spacing:-0.37px">Теория</div><div class="t" style="left:370.600px;top:332px;letter-spacing:-0.17px">для</div><div class="t" style="left:396.800px;top:332px;letter-spacing:-0.17px">практиков</div>
<div class="t ph" style="left:509px;top:332px;letter-spacing:0.05px">&lt;серия ...</div>
<div class="t ph" style="left:592px;top:332px;letter-spacing:0.1px">&lt;характ...</div>
<div class="t " style="left:675px;top:332px">ц</div>
<div class="t r neg" style="left:660px;width:120px;top:332px">-1,000</div>
<div class="t " style="left:797px;top:332px;letter-spacing:0.05px">&lt;произво...</div>
<div class="t r " style="left:860px;width:120px;top:332px">10 150,00</div>
<div class="t " style="left:997px;top:332px">20%</div>
<div class="t r neg" style="left:1056px;width:120px;top:332px">-1 691,67</div>
<div class="t r neg" style="left:1178px;width:120px;top:332px">-10 150,00</div>
<div class="t " style="left:1315px;top:332px;letter-spacing:0.0px">&lt;произволь...</div>
<div class="t r " style="left:1392px;width:120px;top:332px">10 150,00</div>
<div class="t r neg" style="left:1528px;width:120px;top:332px">-1 691,67</div>
<div class="t r neg" style="left:1650px;width:120px;top:332px">-10 150,00</div>
<div class="abs" style="left:234px;top:382px;width:1654px;height:1px;background:#e3e3e3"></div>
<div class="t r " style="left:152px;width:120px;top:361px">2</div>
<div class="t" style="left:325.600px;top:361px;letter-spacing:-0.37px">Теория</div><div class="t" style="left:370.600px;top:361px;letter-spacing:-0.17px">для</div><div class="t" style="left:396.800px;top:361px;letter-spacing:-0.17px">практиков</div>
<div class="t ph" style="left:509px;top:361px;letter-spacing:0.05px">&lt;серия ...</div>
<div class="t ph" style="left:592px;top:361px;letter-spacing:0.1px">&lt;характ...</div>
<div class="t " style="left:675px;top:361px">ц</div>
<div class="t r neg" style="left:660px;width:120px;top:361px">-1,000</div>
<div class="t " style="left:797px;top:361px;letter-spacing:0.05px">&lt;произво...</div>
<div class="t r " style="left:860px;width:120px;top:361px">2 257,00</div>
<div class="t " style="left:997px;top:361px">20%</div>
<div class="t r neg" style="left:1056px;width:120px;top:361px">-376,17</div>
<div class="t r neg" style="left:1178px;width:120px;top:361px">-2 257,00</div>
<div class="t " style="left:1315px;top:361px;letter-spacing:0.0px">&lt;произволь...</div>
<div class="t r " style="left:1392px;width:120px;top:361px">2 257,00</div>
<div class="t r neg" style="left:1528px;width:120px;top:361px">-376,17</div>
<div class="t r neg" style="left:1650px;width:120px;top:361px">-2 257,00</div>
<div class="abs" style="left:234px;top:411px;width:1654px;height:1px;background:#e3e3e3"></div>
<div class="t r " style="left:152px;width:120px;top:390px">3</div>
<div class="t" style="left:325.600px;top:390px;letter-spacing:-0.37px">Теория</div><div class="t" style="left:370.600px;top:390px;letter-spacing:-0.17px">для</div><div class="t" style="left:396.800px;top:390px;letter-spacing:-0.17px">практиков</div>
<div class="t ph" style="left:509px;top:390px;letter-spacing:0.05px">&lt;серия ...</div>
<div class="t ph" style="left:592px;top:390px;letter-spacing:0.1px">&lt;характ...</div>
<div class="t " style="left:675px;top:390px">ц</div>
<div class="t r neg" style="left:660px;width:120px;top:390px">-2,000</div>
<div class="t " style="left:797px;top:390px;letter-spacing:0.05px">&lt;произво...</div>
<div class="t r " style="left:860px;width:120px;top:390px">332,00</div>
<div class="t " style="left:997px;top:390px">20%</div>
<div class="t r neg" style="left:1056px;width:120px;top:390px">-110,67</div>
<div class="t r neg" style="left:1178px;width:120px;top:390px">-664,00</div>
<div class="t " style="left:1315px;top:390px;letter-spacing:0.0px">&lt;произволь...</div>
<div class="t r " style="left:1392px;width:120px;top:390px">332,00</div>
<div class="t r neg" style="left:1528px;width:120px;top:390px">-110,67</div>
<div class="t r neg" style="left:1650px;width:120px;top:390px">-664,00</div>
<div class="abs" style="left:234px;top:440px;width:1654px;height:1px;background:#e3e3e3"></div>
<div class="t r " style="left:152px;width:120px;top:419px">4</div>
<div class="t" style="left:325.600px;top:419px;letter-spacing:-0.37px">Теория</div><div class="t" style="left:370.600px;top:419px;letter-spacing:-0.17px">для</div><div class="t" style="left:396.800px;top:419px;letter-spacing:-0.17px">практиков</div>
<div class="t ph" style="left:509px;top:419px;letter-spacing:0.05px">&lt;серия ...</div>
<div class="t ph" style="left:592px;top:419px;letter-spacing:0.1px">&lt;характ...</div>
<div class="t " style="left:675px;top:419px">ц</div>
<div class="t r neg" style="left:660px;width:120px;top:419px">-1,000</div>
<div class="t " style="left:797px;top:419px;letter-spacing:0.05px">&lt;произво...</div>
<div class="t r " style="left:860px;width:120px;top:419px">182,00</div>
<div class="t " style="left:997px;top:419px">20%</div>
<div class="t r neg" style="left:1056px;width:120px;top:419px">-30,33</div>
<div class="t r neg" style="left:1178px;width:120px;top:419px">-182,00</div>
<div class="t " style="left:1315px;top:419px;letter-spacing:0.0px">&lt;произволь...</div>
<div class="t r " style="left:1392px;width:120px;top:419px">182,00</div>
<div class="t r neg" style="left:1528px;width:120px;top:419px">-30,33</div>
<div class="t r neg" style="left:1650px;width:120px;top:419px">-182,00</div>
<svg class="abs" style="left:243px;top:911px" width="4" height="6" viewBox="0 0 4 6"><path d="M0 3L4 0v6z" fill="#c4c4c4"/></svg>
<div class="abs" style="left:257px;top:910px;width:1608px;height:8px;border-radius:4px;background:#d4d4d4"></div>
<div class="abs" style="left:257px;top:910px;width:1262px;height:8px;border-radius:4px;background:#999"></div>
<svg class="abs" style="left:1875px;top:911px" width="4" height="6" viewBox="0 0 4 6"><path d="M4 3L0 0v6z" fill="#444"/></svg>
<!--FOOTER-->
<a class="lk" style="left:223px;top:943px;letter-spacing:-0.046px">Пригласить Яндекс к обмену электронными документами в 1С-ЭДО</a>
<div class="t" style="left:222px;top:987px;letter-spacing:-0.36px">Оформление</div>
<div class="t" style="left:303.0px;top:987px;letter-spacing:-0.09px">счетов-фактур</div>
<div class="t" style="left:391.8px;top:987px;letter-spacing:0.06px">комиссионеру</div>
<div class="t" style="left:480.6px;top:987px;letter-spacing:-0.14px">не</div>
<div class="t" style="left:498.2px;top:987px;letter-spacing:-0.04px">требуется</div>
<div class="abs" style="left:1486px;top:941px;width:414px;height:35px;background:#f0f0f0"></div>
<div class="t" style="left:1491px;top:951px;color:#444">НДС:</div>
<div class="abs" style="left:1527px;top:946px;width:111px;height:25px;border:1px solid #d6d6d6;border-radius:3px;background:#f0f0f0"></div>
<div class="t r" style="left:1514px;width:120px;top:951px">-2 208,84</div>
<div class="t" style="left:1648px;top:951px;color:#444;letter-spacing:0.15px">Всего с НДС:</div>
<div class="abs" style="left:1734px;top:946px;width:111px;height:25px;border:1px solid #d6d6d6;border-radius:3px;background:#f0f0f0"></div>
<div class="t r" style="left:1721px;width:120px;top:951px">-13 253,00</div>
<div class="t" style="left:1855px;top:951px;color:#333">RUB</div>
</body>
</html>
